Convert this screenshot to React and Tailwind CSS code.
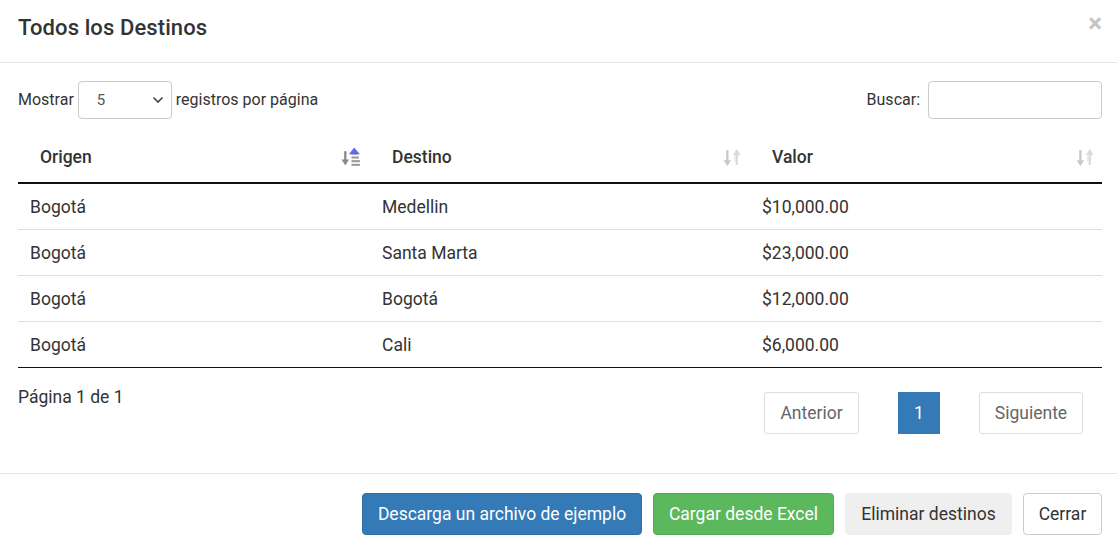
import React from "react";

function SortActive() {
  return (
    <svg width="21" height="21" viewBox="0 0 20 20">
      <rect x="3" y="4" width="2.2" height="10" fill="#8a8a8a" />
      <path d="M0.5 12 L7.7 12 L4.1 17.5 Z" fill="#8a8a8a" />
      <rect x="10" y="9" width="7" height="2" fill="#9a9a9a" />
      <rect x="10" y="12.5" width="8" height="2" fill="#9a9a9a" />
      <rect x="10" y="16" width="8" height="2" fill="#9a9a9a" />
      <rect x="10" y="5.5" width="6" height="2" fill="#a8a8c8" />
      <path d="M12.5 0.5 L18 7 L7.5 7 Z" fill="#6b6be0" />
    </svg>
  );
}

function SortIdle() {
  return (
    <svg width="21" height="21" viewBox="0 0 20 20">
      <rect x="4" y="3" width="2.2" height="11" fill="#c8c8c8" />
      <path d="M1.5 12.5 L8.7 12.5 L5.1 18 Z" fill="#c8c8c8" />
      <rect x="13" y="6" width="2.2" height="11" fill="#dadada" />
      <path d="M10.5 7.5 L17.7 7.5 L14.1 2 Z" fill="#dadada" />
      <rect x="11.5" y="8" width="1.5" height="6" fill="#e8e8e8" />
    </svg>
  );
}

const rows = [
  ["Bogotá", "Medellin", "$10,000.00"],
  ["Bogotá", "Santa Marta", "$23,000.00"],
  ["Bogotá", "Bogotá", "$12,000.00"],
  ["Bogotá", "Cali", "$6,000.00"],
];

export default function App() {
  return (
    <div
      className="w-[1117px] h-[542px] bg-white text-[#333] overflow-hidden"
      style={{ fontFamily: "Roboto, 'Liberation Sans', Arial, sans-serif" }}
    >
      {/* Header */}
      <div className="h-[63px] border-b border-[#e5e5e5] pl-[18px] pr-[15px] pt-[14px] flex justify-between items-start">
        <h4 className="text-[22px] leading-[28px] font-medium text-[#333] tracking-[0.1px]">Todos los Destinos</h4>
        <span className="text-[26px] leading-[16px] font-bold text-[#c4c4c4] mt-[1px]">×</span>
      </div>

      {/* Body */}
      <div className="pl-[18px] pr-[15px] pt-[18px] pb-[39px] border-b border-[#e5e5e5]">
        <div className="flex justify-between items-center h-[38px] text-[16px]">
          <div className="flex items-center">
            <span>Mostrar</span>
            <div className="ml-[4px] mr-[4px] w-[94px] h-[38px] border border-[#ccc] rounded-[4px] flex items-center justify-between pl-[18px] pr-[7px] text-[15px] text-[#555]">
              <span>5</span>
              <svg width="12" height="8" viewBox="0 0 12 8">
                <path d="M1.5 1.5 L6 6 L10.5 1.5" fill="none" stroke="#444" strokeWidth="1.6" />
              </svg>
            </div>
            <span>registros por página</span>
          </div>
          <div className="flex items-center">
            <span>Buscar:</span>
            <div className="ml-[8px] w-[174px] h-[38px] border border-[#ccc] rounded-[4px]" />
          </div>
        </div>

        {/* Table */}
        <div className="mt-[13px] text-[17.5px]">
          <div className="grid grid-cols-[354px_380px_350px] h-[52px] border-b-2 border-[#111] font-medium">
            <div className="flex items-center justify-between pl-[22px] pr-[10px]">
              <span>Origen</span>
              <SortActive />
            </div>
            <div className="flex items-center justify-between pl-[20px] pr-[9px]">
              <span>Destino</span>
              <SortIdle />
            </div>
            <div className="flex items-center justify-between pl-[20px] pr-[6px]">
              <span>Valor</span>
              <SortIdle />
            </div>
          </div>
          {rows.map((r, i) => (
            <div
              key={i}
              className={
                "grid grid-cols-[354px_380px_350px] h-[46px] items-center pt-[1px] " +
                (i < rows.length - 1 ? "border-b border-[#ddd]" : "border-b border-[#111]")
              }
            >
              <div className="pl-[12px]">{r[0]}</div>
              <div className="pl-[10px]">{r[1]}</div>
              <div className="pl-[10px]">{r[2]}</div>
            </div>
          ))}
        </div>

        {/* Info + pagination */}
        <div className="flex justify-between items-start pt-[18px] text-[17.5px]">
          <div className="leading-[22px]">Página 1 de 1</div>
          <div className="flex items-center gap-[39px] mt-[6px] mr-[19px]">
            <div className="w-[95px] h-[42px] border border-[#ddd] rounded-[3px] flex items-center justify-center text-[#666]">
              Anterior
            </div>
            <div className="w-[42px] h-[42px] bg-[#337ab7] flex items-center justify-center text-white">1</div>
            <div className="w-[104px] h-[42px] border border-[#ddd] rounded-[3px] flex items-center justify-center text-[#666]">
              Siguiente
            </div>
          </div>
        </div>
      </div>

      {/* Footer */}
      <div className="flex justify-end gap-[11px] px-[15px] pt-[19px] text-[17.5px]">
        <div className="w-[280px] h-[42px] bg-[#337ab7] border border-[#2e6da4] rounded-[4px] text-white flex items-center justify-center">
          Descarga un archivo de ejemplo
        </div>
        <div className="w-[181px] h-[42px] bg-[#5cb85c] border border-[#4cae4c] rounded-[4px] text-white flex items-center justify-center">
          Cargar desde Excel
        </div>
        <div className="w-[167px] h-[42px] bg-[#efefef] rounded-[4px] text-[#333] flex items-center justify-center">
          Eliminar destinos
        </div>
        <div className="w-[79px] h-[42px] bg-white border border-[#ccc] rounded-[4px] text-[#333] flex items-center justify-center">
          Cerrar
        </div>
      </div>
    </div>
  );
}
